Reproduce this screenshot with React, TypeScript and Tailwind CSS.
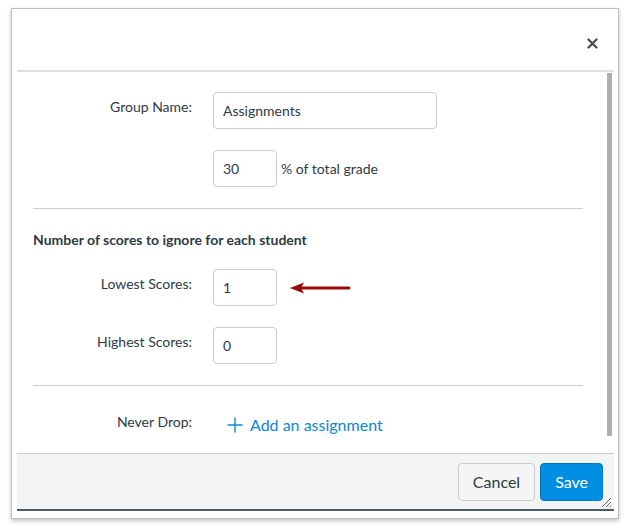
import React from "react";

const font = { fontFamily: "Lato, 'Open Sans', sans-serif" };

function Label({ children }: { children: React.ReactNode }) {
  return (
    <div className="w-[159px] shrink-0 text-right text-[14px] leading-[20px] text-[#2d3b45] pt-[5px]">
      {children}
    </div>
  );
}

function Input({ value, w }: { value: string; w: string }) {
  return (
    <div
      className={`${w} h-[37px] shrink-0 rounded-[4px] border border-[#c7cdd1] bg-white flex items-center pl-[9px] text-[14px] text-[#2d3b45]`}
    >
      {value}
    </div>
  );
}

export default function App() {
  return (
    <div className="w-[627px] h-[528px] bg-white" style={font}>
      <div className="pt-[8px] pl-[11px]">
        <div className="w-[608px] h-[511px] border border-[#bfbfbf] bg-white shadow-[0_2px_4px_rgba(0,0,0,0.25)] pl-[5px] pr-[4px] flex flex-col">
          {/* header */}
          <div className="h-[61px] shrink-0 flex items-center justify-end pr-[16px] pt-[8px]">
            <svg width="11" height="11" viewBox="0 0 11 11">
              <path d="M1.5 1.5 L9.5 9.5 M9.5 1.5 L1.5 9.5" stroke="#4a4a4a" strokeWidth="2.2" strokeLinecap="round" />
            </svg>
          </div>
          <div className="h-[2px] bg-[#dde1e4] shrink-0" />
          {/* body */}
          <div className="h-[381px] shrink-0 flex">
            <div className="flex-1 pl-[16px] pr-[24px]">
              <div className="flex items-start mt-[20px]">
                <Label>Group Name:</Label>
                <div className="ml-[21px]">
                  <Input value="Assignments" w="w-[224px]" />
                </div>
              </div>
              <div className="flex items-center mt-[21px]">
                <div className="w-[159px] shrink-0" />
                <div className="ml-[21px] flex items-center">
                  <Input value="30" w="w-[64px]" />
                  <span className="ml-[4px] text-[14px] text-[#2d3b45]">% of total grade</span>
                </div>
              </div>
              <div className="h-px bg-[#c7cdd1] mt-[21px]" />
              <div className="mt-[21px] text-[14px] leading-[20px] font-bold text-[#2d3b45]">
                Number of scores to ignore for each student
              </div>
              <div className="flex items-start mt-[19px]">
                <Label>Lowest Scores:</Label>
                <div className="ml-[21px] flex items-center h-[37px]">
                  <Input value="1" w="w-[64px]" />
                  <svg className="ml-[13px]" width="62" height="14" viewBox="0 0 62 14">
                    <path d="M0 7 L14 1.5 L11 7 L14 12.5 Z" fill="#9a0b0b" />
                    <path d="M10 7 L59 7" stroke="#9a0b0b" strokeWidth="3" strokeLinecap="round" />
                  </svg>
                </div>
              </div>
              <div className="flex items-start mt-[21px]">
                <Label>Highest Scores:</Label>
                <div className="ml-[21px]">
                  <Input value="0" w="w-[64px]" />
                </div>
              </div>
              <div className="h-px bg-[#c7cdd1] mt-[21px]" />
              <div className="flex items-start mt-[26px]">
                <Label>
                  <span className="relative top-[-5px]">Never Drop:</span>
                </Label>
                <div className="ml-[35px] flex items-center text-[16px] text-[#0e86d4] mt-[1px]">
                  <svg width="16" height="16" viewBox="0 0 16 16">
                    <path d="M8 0.5 V15.5 M0.5 8 H15.5" stroke="#0e86d4" strokeWidth="1.4" />
                  </svg>
                  <span className="ml-[7px]">Add an assignment</span>
                </div>
              </div>
            </div>
            <div className="w-[5px] mr-[2px] pt-[1px] shrink-0">
              <div className="h-[363px] bg-[#a9b1b6]" />
            </div>
          </div>
          {/* footer */}
          <div className="h-[58px] shrink-0 bg-[#f2f3f3] border-t border-[#c7cdd1] border-b-2 border-b-[#4a5963] flex items-center justify-end pr-[11px] relative">
            <div className="h-[38px] px-[14px] flex items-center rounded-[4px] border border-[#c7cdd1] bg-[#f5f5f5] text-[16px] text-[#2d3b45]">
              Cancel
            </div>
            <div className="ml-[5px] h-[38px] px-[14px] flex items-center rounded-[4px] border border-[#0077c2] bg-[#008ee2] text-[16px] text-white">
              Save
            </div>
            <svg className="absolute right-[2px] bottom-[1px]" width="12" height="12" viewBox="0 0 12 12">
              <path d="M11 2 L2 11 M11 6 L6 11 M11 9.5 L9.5 11" stroke="#666" strokeWidth="1" />
            </svg>
          </div>
        </div>
      </div>
    </div>
  );
}
